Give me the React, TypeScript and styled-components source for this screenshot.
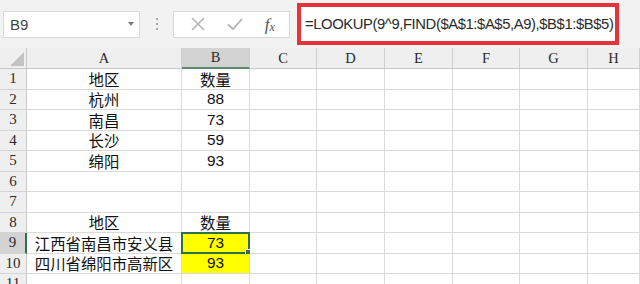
import styled, { createGlobalStyle } from 'styled-components'

const GlobalStyle = createGlobalStyle`
  html, body {
    margin: 0;
    padding: 0;
    background: #ffffff;
  }
  body {
    width: 640px;
    height: 284px;
    overflow: hidden;
  }
`

interface Row {
  num: number
  a?: string
  b?: string
  highlight?: boolean
  selected?: boolean
}

const rows: Row[] = [
  { num: 1, a: '地区', b: '数量' },
  { num: 2, a: '杭州', b: '88' },
  { num: 3, a: '南昌', b: '73' },
  { num: 4, a: '长沙', b: '59' },
  { num: 5, a: '绵阳', b: '93' },
  { num: 6 },
  { num: 7 },
  { num: 8, a: '地区', b: '数量' },
  { num: 9, a: '江西省南昌市安义县', b: '73', highlight: true, selected: true },
  { num: 10, a: '四川省绵阳市高新区', b: '93', highlight: true },
  { num: 11 },
]

const columns = ['A', 'B', 'C', 'D', 'E', 'F', 'G', 'H']
const emptyCols = ['C', 'D', 'E', 'F', 'G', 'H']

function App() {
  return (
    <>
      <GlobalStyle />
      <Page>
        <FormulaBar>
          <NameBox>
            <span>B9</span>
            <Caret />
          </NameBox>
          <Grip>
            <i />
            <i />
            <i />
          </Grip>
          <ActionBox>
            <svg width="16" height="16" viewBox="0 0 16 16">
              <path d="M2 2 L14 14 M14 2 L2 14" stroke="#b4b4b4" strokeWidth="1.6" fill="none" />
            </svg>
            <svg width="18" height="16" viewBox="0 0 18 16">
              <path d="M2 8.5 L7 13 L16 3" stroke="#b4b4b4" strokeWidth="1.8" fill="none" />
            </svg>
            <Fx>
              f<sub>x</sub>
            </Fx>
          </ActionBox>
          <FormulaInput>=LOOKUP(9^9,FIND($A$1:$A$5,A9),$B$1:$B$5)</FormulaInput>
        </FormulaBar>

        <Sheet>
          <Corner>
            <svg width="14" height="14" viewBox="0 0 14 14">
              <path d="M14 0 L14 14 L0 14 Z" fill="#c3c3c3" />
            </svg>
          </Corner>
          {columns.map((c) => (
            <ColHeader key={c} $active={c === 'B'}>
              {c}
            </ColHeader>
          ))}

          {rows.map((r) => (
            <RowGroup key={r.num} r={r} />
          ))}
        </Sheet>
      </Page>
    </>
  )
}

function RowGroup({ r }: { r: Row }) {
  return (
    <>
      <RowHeader $active={r.num === 9}>{r.num}</RowHeader>
      <Cell>{r.a}</Cell>
      <Cell $fill={r.highlight}>
        {r.b}
        {r.selected && (
          <>
            <SelectFrame />
            <FillHandle />
          </>
        )}
      </Cell>
      {emptyCols.map((c) => (
        <Cell key={c} />
      ))}
    </>
  )
}

const Page = styled.div`
  width: 640px;
  height: 284px;
  overflow: hidden;
  display: flex;
  flex-direction: column;
`

const FormulaBar = styled.div`
  height: 48px;
  flex-shrink: 0;
  background: #f2f2f2;
  display: flex;
  align-items: center;
  padding-left: 3px;
  box-sizing: border-box;
`

const NameBox = styled.div`
  width: 137px;
  height: 27px;
  box-sizing: border-box;
  background: #ffffff;
  border: 1px solid #d9d9d9;
  display: flex;
  align-items: center;
  justify-content: space-between;
  padding: 0 5px 0 6px;
  font-family: 'Liberation Sans', Arial, sans-serif;
  font-size: 15px;
  color: #444444;
`

const Caret = styled.span`
  width: 0;
  height: 0;
  border-left: 3.5px solid transparent;
  border-right: 3.5px solid transparent;
  border-top: 4px solid #7a7a7a;
`

const Grip = styled.div`
  width: 33px;
  display: flex;
  flex-direction: column;
  align-items: center;
  gap: 3px;

  i {
    display: block;
    width: 2px;
    height: 2px;
    background: #a8a8a8;
  }
`

const ActionBox = styled.div`
  width: 117px;
  height: 27px;
  box-sizing: border-box;
  background: #ffffff;
  border: 1px solid #d9d9d9;
  display: flex;
  align-items: center;
  justify-content: space-around;
  padding: 0 4px 0 6px;
`

const Fx = styled.span`
  font-family: 'Liberation Serif', 'Times New Roman', serif;
  font-style: italic;
  font-size: 17px;
  color: #555555;
  line-height: 1;

  sub {
    font-size: 12px;
    vertical-align: -1px;
  }
`

const FormulaInput = styled.div`
  margin-left: 7px;
  width: 322px;
  height: 42px;
  box-sizing: border-box;
  border: 4px solid #e5323b;
  background: #ffffff;
  display: flex;
  align-items: center;
  padding-left: 4px;
  font-family: 'Liberation Sans', Arial, sans-serif;
  font-size: 14.8px;
  letter-spacing: -0.4px;
  color: #2a2a2a;
  white-space: nowrap;
`

const Sheet = styled.div`
  display: grid;
  grid-template-columns: 27px 155px 68px 67px 68px 68px 67px 68px 1fr;
  grid-template-rows: 21px repeat(11, 20.5px);
`

const Corner = styled.div`
  background: #efefef;
  border-right: 1px solid #c8c8c8;
  border-bottom: 1px solid #c8c8c8;
  box-sizing: border-box;
  display: flex;
  align-items: flex-end;
  justify-content: flex-end;
  padding: 0 2px 2px 0;
`

const ColHeader = styled.div<{ $active?: boolean }>`
  background: ${(p) => (p.$active ? '#d3d3d3' : '#efefef')};
  border-right: 1px solid #d0d0d0;
  border-bottom: ${(p) => (p.$active ? '2px solid #5f8a6c' : '1px solid #c8c8c8')};
  box-sizing: border-box;
  display: flex;
  align-items: center;
  justify-content: center;
  font-family: 'Liberation Serif', 'Times New Roman', serif;
  font-size: 14.5px;
  color: #2a2a2a;
`

const RowHeader = styled.div<{ $active?: boolean }>`
  background: ${(p) => (p.$active ? '#d3d3d3' : '#efefef')};
  border-right: ${(p) => (p.$active ? '2px solid #2f6f45' : '1px solid #c8c8c8')};
  border-bottom: 1px solid #d4d4d4;
  box-sizing: border-box;
  display: flex;
  align-items: center;
  justify-content: center;
  font-family: 'Liberation Serif', 'Times New Roman', serif;
  font-size: 15px;
  color: #2a2a2a;
`

const Cell = styled.div<{ $fill?: boolean }>`
  position: relative;
  background: ${(p) => (p.$fill ? '#ffff00' : '#ffffff')};
  border-right: 1px solid #dadada;
  border-bottom: 1px solid #dadada;
  box-sizing: border-box;
  display: flex;
  align-items: center;
  justify-content: center;
  font-family: 'Liberation Sans', 'Noto Sans CJK SC', sans-serif;
  font-size: 15.4px;
  color: #111111;
  white-space: nowrap;
`

const SelectFrame = styled.span`
  position: absolute;
  left: -1px;
  top: -1px;
  right: -1px;
  bottom: -1px;
  border: 2px solid #2f6f45;
  pointer-events: none;
`

const FillHandle = styled.span`
  position: absolute;
  right: -3px;
  bottom: -3px;
  width: 5px;
  height: 5px;
  background: #2f6f45;
  border: 1px solid #ffffff;
`

export default App
